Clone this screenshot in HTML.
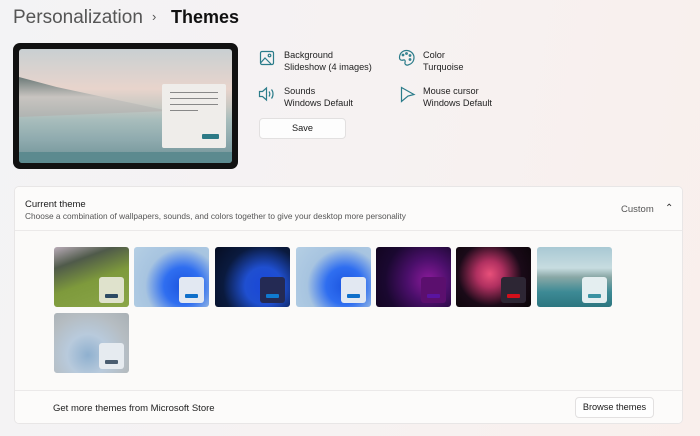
<!DOCTYPE html>
<html><head><style>
*{margin:0;padding:0;box-sizing:border-box}
body{width:700px;height:436px;overflow:hidden;font-family:"Liberation Sans",sans-serif;background:linear-gradient(100deg,#f3f3f5 0%,#f6f2f2 50%,#f9efec 100%);position:relative;color:#1a1a1a}
.abs{position:absolute}
.t{font-size:9.2px;line-height:12px;color:#222}
.tile{position:absolute;width:75px;height:60px;border-radius:3px;overflow:hidden}
.tile .w{position:absolute;right:5px;top:30px;width:25px;height:26px;border-radius:3px}
.tile .b{position:absolute;left:6px;bottom:5px;width:13px;height:4px;border-radius:1px}
</style></head><body>
<div class="abs" style="left:13px;top:7px;font-size:19px;color:#555">Personalization</div>
<div class="abs" style="left:152px;top:9px;font-size:13px;color:#555">›</div>
<div class="abs" style="left:171px;top:7px;font-size:18px;font-weight:bold;color:#111">Themes</div>

<div class="abs" style="left:13px;top:43px;width:225px;height:126px;background:#111;border-radius:7px"></div>
<div class="abs" style="left:19px;top:49px;width:213px;height:114px;border-radius:3px;overflow:hidden;background:linear-gradient(180deg,#c9d0d2 0%,#e8d4cc 35%,#c9c9c3 50%,#a8bdbc 62%,#8eaaae 80%,#6f9195 100%)">
 <div class="abs" style="left:0;top:28px;width:150px;height:40px;background:linear-gradient(180deg,#6c7a78 0%,#c8c4c0 50%,#b0b4b2 100%);clip-path:polygon(0 0,25% 25%,100% 85%,0 100%)"></div>
 <div class="abs" style="left:0;top:103px;width:213px;height:11px;background:#5c8a8f"></div>
 <div class="abs" style="left:143px;top:35px;width:64px;height:64px;background:#efedea;border-radius:2px">
  <div class="abs" style="left:8px;top:8px;width:48px;height:1px;background:#888"></div>
  <div class="abs" style="left:8px;top:14px;width:48px;height:1px;background:#888"></div>
  <div class="abs" style="left:8px;top:20px;width:48px;height:1px;background:#888"></div>
  <div class="abs" style="left:8px;top:26px;width:28px;height:1px;background:#888"></div>
  <div class="abs" style="left:40px;top:50px;width:17px;height:5px;background:#2d7a86;border-radius:1px"></div>
 </div>
</div>

<svg class="abs" style="left:259px;top:50px" width="16" height="16" viewBox="0 0 16 16" fill="none" stroke="#2b7c8a" stroke-width="1.2"><rect x="1.5" y="1.5" width="13" height="13" rx="1.5"/><circle cx="10.5" cy="5.5" r="1.3"/><path d="M1.5 13 L6 8 L12 14"/></svg>
<div class="abs t" style="left:284px;top:49px">Background<br>Slideshow (4 images)</div>
<svg class="abs" style="left:398px;top:49px" width="17" height="17" viewBox="0 0 17 17" fill="none" stroke="#2b7c8a" stroke-width="1.2"><path d="M8.5 1.5C4 1.5 1.5 5 1.5 8.5c0 3 2.5 3 4 2.5 1.5-.5 2 1 1.5 2.5-.5 1.5 1 3 3 2.5 4-1 6-4 6-7.5 0-4-3.5-7-7.5-7z"/><circle cx="5" cy="6" r=".8"/><circle cx="8.5" cy="4.5" r=".8"/><circle cx="12" cy="6.5" r=".8"/><circle cx="12" cy="10.5" r=".8"/></svg>
<div class="abs t" style="left:423px;top:49px">Color<br>Turquoise</div>
<svg class="abs" style="left:258px;top:86px" width="20" height="16" viewBox="0 0 20 16" fill="none" stroke="#2b7c8a" stroke-width="1.2"><path d="M1.5 5.5h3l4-3.5v12l-4-3.5h-3z"/><path d="M11 5.5c1 1.5 1 3.5 0 5"/><path d="M13.5 3.5c2 2.5 2 6.5 0 9"/></svg>
<div class="abs t" style="left:284px;top:85px">Sounds<br>Windows Default</div>
<svg class="abs" style="left:400px;top:86px" width="16" height="17" viewBox="0 0 16 17" fill="none" stroke="#2b7c8a" stroke-width="1.2"><path d="M1.5 1.5L14 8.5l-6 1.5-6.5 5.5z"/></svg>
<div class="abs t" style="left:423px;top:85px">Mouse cursor<br>Windows Default</div>
<div class="abs" style="left:259px;top:118px;width:87px;height:21px;background:#fdfdfd;border:1px solid #e2e0e0;border-radius:4px;font-size:9.2px;text-align:center;line-height:19px">Save</div>

<div class="abs" style="left:14px;top:186px;width:669px;height:238px;background:#fbfaf9;border:1px solid #e8e6e6;border-radius:5px;overflow:hidden">
 <div class="abs" style="left:0;top:0;width:669px;height:44px;background:#fcfbfa;border-bottom:1px solid #ebe9e9"></div>
 <div class="abs" style="left:10px;top:12px;font-size:9.5px;color:#1a1a1a">Current theme</div>
 <div class="abs" style="left:10px;top:24px;font-size:8.3px;color:#555">Choose a combination of wallpapers, sounds, and colors together to give your desktop more personality</div>
 <div class="abs" style="left:606px;top:17px;font-size:9.5px;color:#555">Custom</div>
 <div class="abs" style="left:650px;top:16px;font-size:10px;color:#333">&#8963;</div>
 <div class="abs" style="left:0;top:203px;width:669px;height:35px;border-top:1px solid #ebe9e9;background:#fcfbfa"></div>
 <div class="abs" style="left:38px;top:216px;font-size:9.5px;color:#222">Get more themes from Microsoft Store</div>
 <div class="abs" style="left:560px;top:210px;width:79px;height:21px;background:#fefefe;border:1px solid #e2e0e0;border-radius:4px;font-size:9.2px;text-align:center;line-height:19px">Browse themes</div>
</div>

<div class="tile" style="left:54px;top:247px;background:linear-gradient(160deg,#b9acb8 0%,#4f5a4a 25%,#7e9a3c 55%,#8aa648 100%)"><div class="w" style="background:#dfe2cc"><div class="b" style="background:#2c4a63"></div></div></div>
<div class="tile" style="left:134px;top:247px;background:radial-gradient(circle at 65% 65%,#1c55e0 0%,#2f6ef0 30%,#a7c4e0 60%,#b5cfe4 100%)"><div class="w" style="background:#e2e8f2"><div class="b" style="background:#0f6fca"></div></div></div>
<div class="tile" style="left:215px;top:247px;background:radial-gradient(circle at 65% 65%,#1a47d8 0%,#1f4fd0 30%,#0a1a3e 65%,#060d22 100%)"><div class="w" style="background:#242a54"><div class="b" style="background:#0f7ad0"></div></div></div>
<div class="tile" style="left:296px;top:247px;background:radial-gradient(circle at 65% 65%,#1c55e0 0%,#2f6ef0 30%,#a7c4e0 60%,#b5cfe4 100%)"><div class="w" style="background:#e2e8f2"><div class="b" style="background:#0f6fca"></div></div></div>
<div class="tile" style="left:376px;top:247px;background:radial-gradient(circle at 70% 55%,#8a1a9a 0%,#4a0f6a 35%,#1a0830 70%,#120520 100%)"><div class="w" style="background:#5b0f6e"><div class="b" style="background:#5a14a0"></div></div></div>
<div class="tile" style="left:456px;top:247px;background:radial-gradient(circle at 45% 45%,#e8507a 0%,#b03060 25%,#1a0a18 60%,#0a0508 100%)"><div class="w" style="background:#2d2634"><div class="b" style="background:#d40f1a"></div></div></div>
<div class="tile" style="left:537px;top:247px;background:linear-gradient(180deg,#a9c9d4 0%,#c7dce0 35%,#8aa8a6 50%,#3d8a95 75%,#2c7680 100%)"><div class="w" style="background:#e4eef0"><div class="b" style="background:#3a92a2"></div></div></div>
<div class="tile" style="left:54px;top:313px;background:radial-gradient(circle at 45% 70%,#8fb0cf 0%,#b8cadc 35%,#b5bcc1 70%,#a9b0b5 100%)"><div class="w" style="background:#e6ebf0"><div class="b" style="background:#4a5d70"></div></div></div>
</body></html>
